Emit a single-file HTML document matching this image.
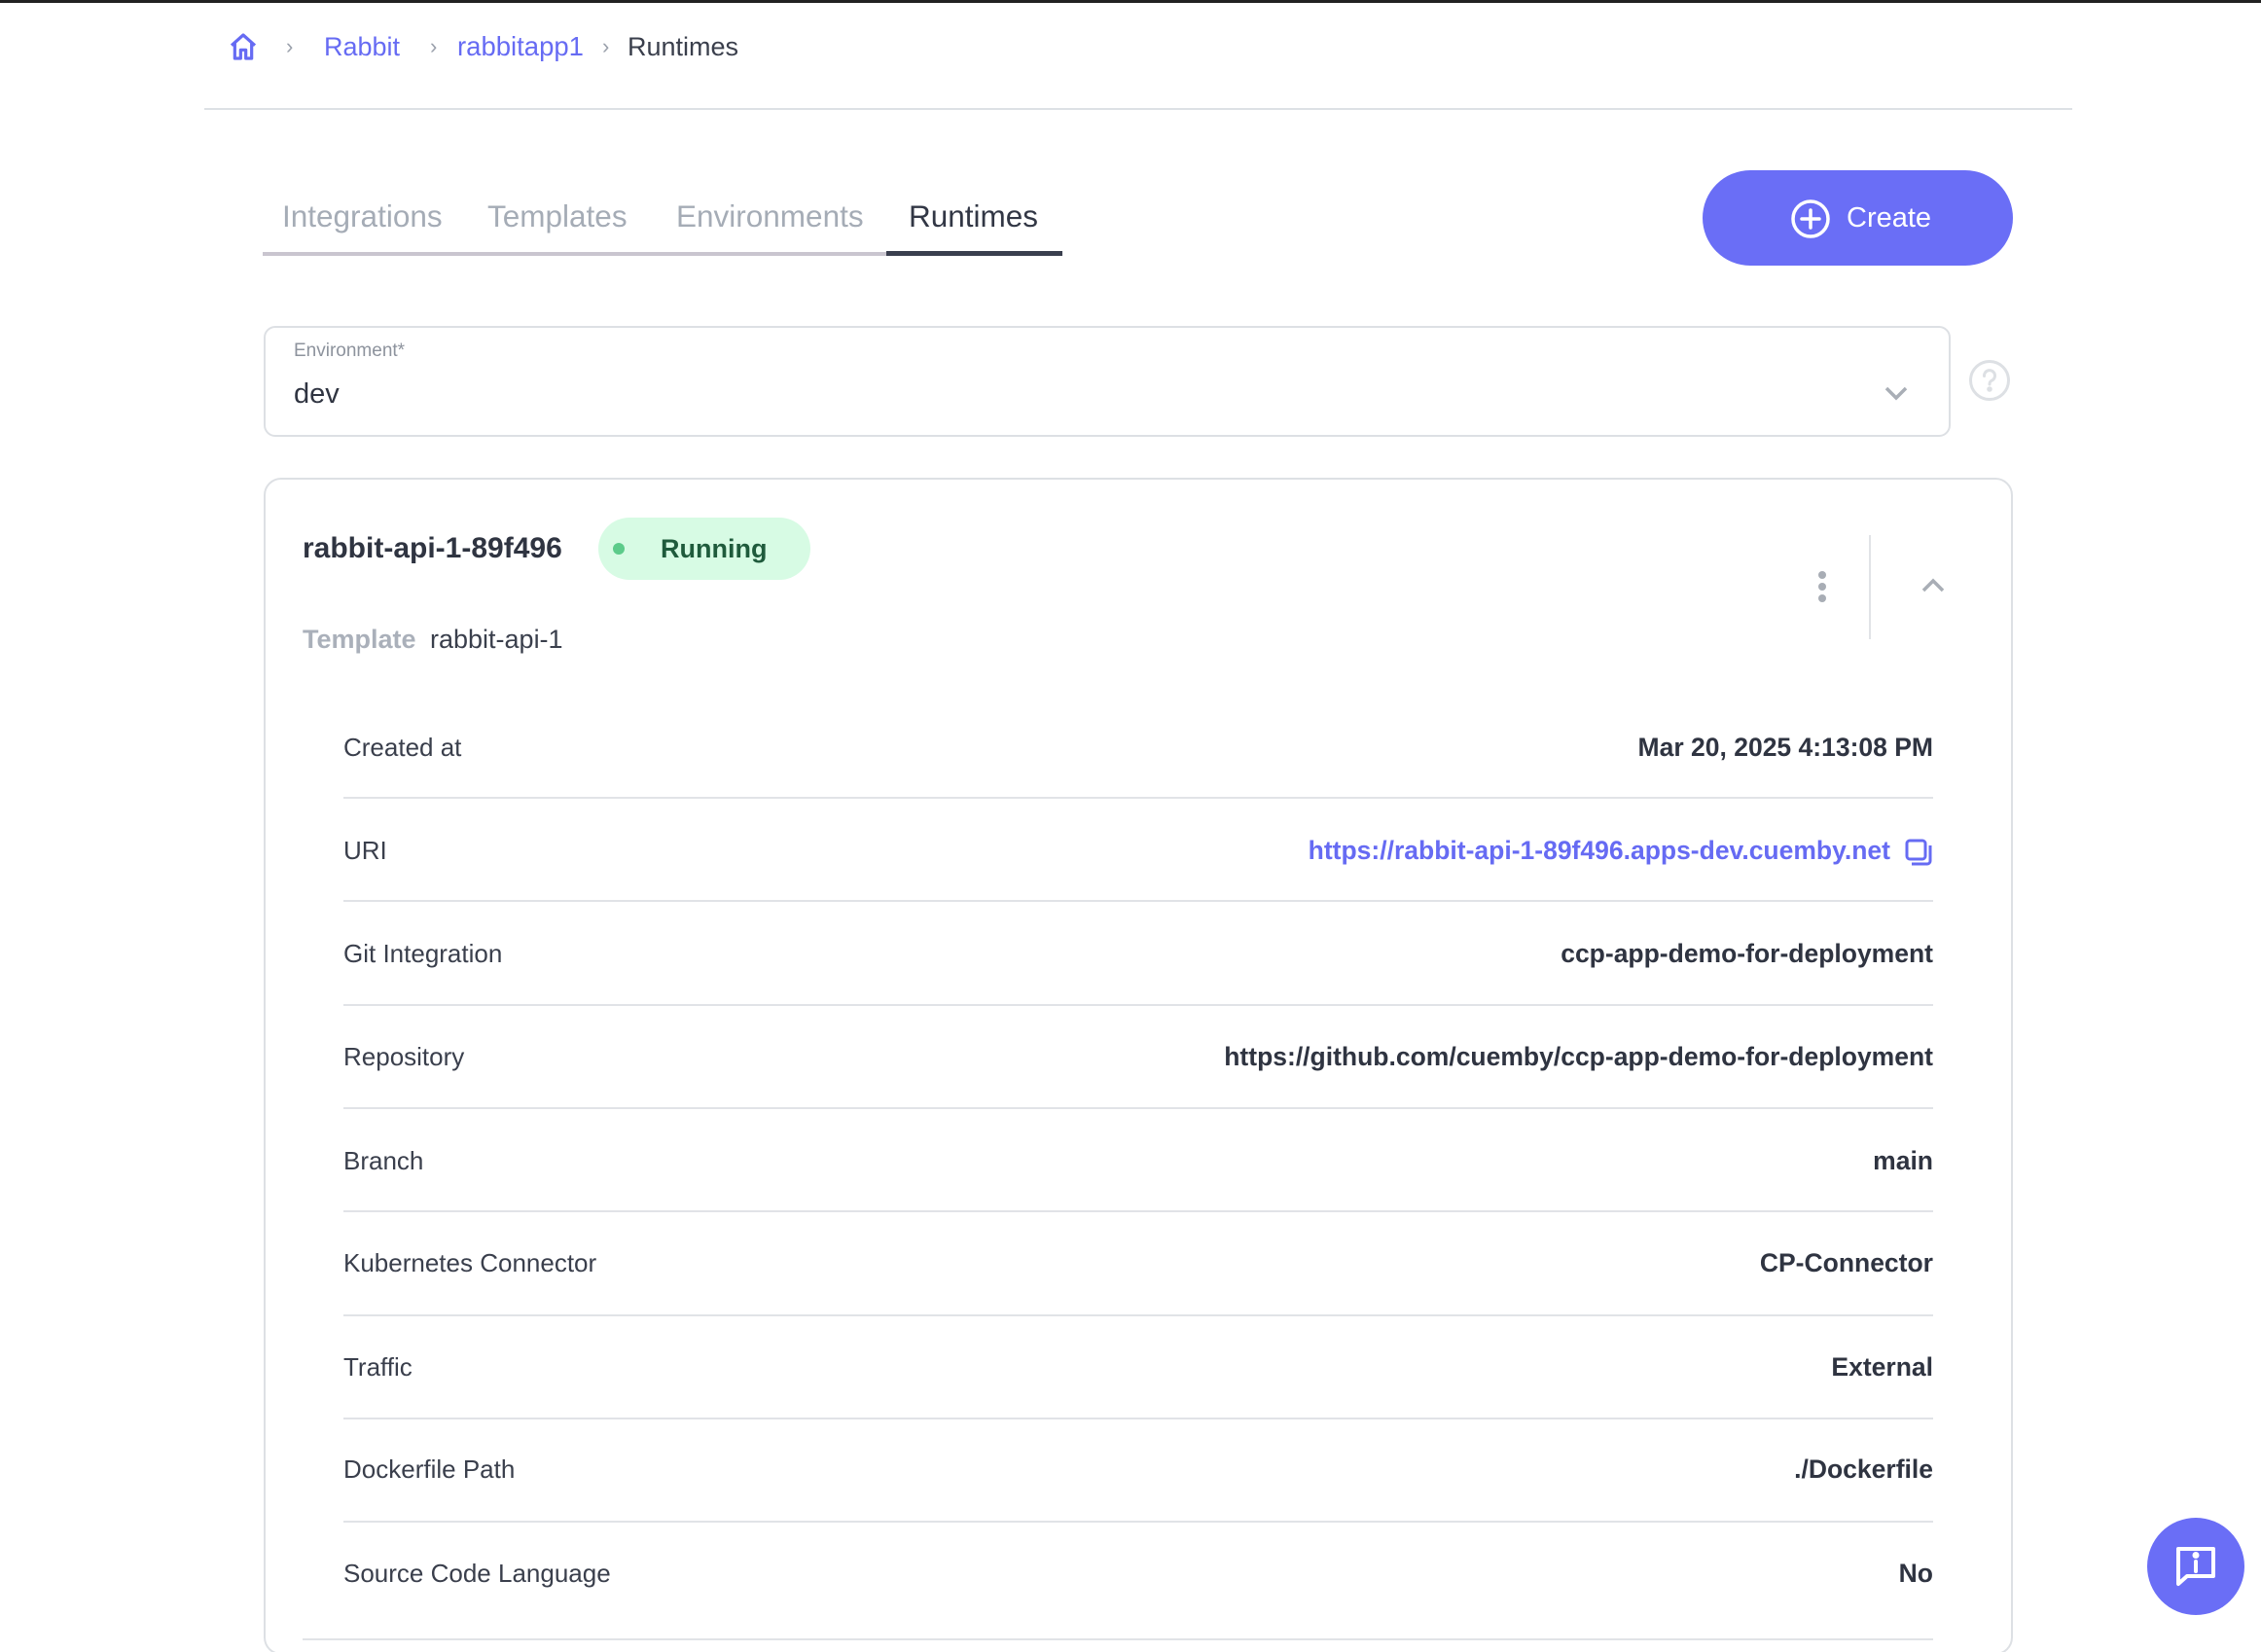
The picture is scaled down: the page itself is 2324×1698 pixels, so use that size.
<!DOCTYPE html>
<html><head><meta charset="utf-8">
<style>
*{margin:0;padding:0;box-sizing:border-box}
html,body{width:2324px;height:1698px;overflow:hidden;background:#fff;font-family:"Liberation Sans",sans-serif;color:#2f3441}
#wrap{position:relative;width:2324px;height:1698px;overflow:hidden}
.a{position:absolute;white-space:nowrap}
.t{line-height:40px;height:40px}
.row{position:absolute;left:353px;width:1634px;height:40px;line-height:40px;font-size:26px}
.row .l{position:absolute;left:0;color:#3a3f4c}
.row .r{position:absolute;right:0;color:#2f3441;font-weight:bold;font-size:26.5px}
.hr{position:absolute;left:353px;width:1634px;height:2px;background:#e1e3e7}
</style></head><body><div id="wrap">
<div class="a" style="left:0;top:0;width:2324px;height:3px;background:#222"></div>

<svg class="a" style="left:234px;top:32px" width="32" height="32" viewBox="0 0 24 24" fill="none" stroke="#666bf3" stroke-width="2.4" stroke-linejoin="round"><path d="M3 11 L12 3 L21 11 M5.5 9 V21 H10 V14.5 H14 V21 H18.5 V9"/></svg>
<div class="a t" style="left:294px;top:28px;font-size:22px;color:#9aa0ab">›</div>
<div class="a t" style="left:333px;top:28px;font-size:27px;color:#666bf3">Rabbit</div>
<div class="a t" style="left:442px;top:28px;font-size:22px;color:#9aa0ab">›</div>
<div class="a t" style="left:470px;top:28px;font-size:27.5px;color:#666bf3">rabbitapp1</div>
<div class="a t" style="left:619px;top:28px;font-size:22px;color:#9aa0ab">›</div>
<div class="a t" style="left:645px;top:28px;font-size:27px;color:#3a3f4c">Runtimes</div>
<div class="a" style="left:210px;top:111px;width:1920px;height:2px;background:#dde1e5"></div>

<div class="a t" style="left:290px;top:202px;font-size:31.5px;color:#a5acb6">Integrations</div>
<div class="a t" style="left:501px;top:202px;font-size:31.5px;color:#a5acb6">Templates</div>
<div class="a t" style="left:695px;top:202px;font-size:31.5px;color:#a5acb6">Environments</div>
<div class="a t" style="left:934px;top:202px;font-size:31.5px;color:#323745">Runtimes</div>
<div class="a" style="left:270px;top:259px;width:641px;height:4px;background:#c9c5cf"></div>
<div class="a" style="left:911px;top:258px;width:181px;height:5px;background:#3a3f4e"></div>

<div class="a" style="left:1750px;top:175px;width:319px;height:98px;border-radius:49px;background:#6a6ef6"></div>
<svg class="a" style="left:1840px;top:204px" width="42" height="42" viewBox="0 0 42 42" fill="none" stroke="#fff" stroke-width="3.5" stroke-linecap="round"><circle cx="21" cy="21" r="18"/><path d="M21 12V30M12 21H30"/></svg>
<div class="a t" style="left:1898px;top:204px;font-size:29px;color:#fff">Create</div>

<div class="a" style="left:271px;top:335px;width:1734px;height:114px;border:2px solid #dde0e4;border-radius:12px"></div>
<div class="a" style="left:302px;top:349px;font-size:19px;line-height:24px;color:#8d939d">Environment*</div>
<div class="a t" style="left:302px;top:385px;font-size:29px;color:#2f3441">dev</div>
<svg class="a" style="left:1936px;top:395px" width="26" height="18" viewBox="0 0 26 18" fill="none" stroke="#a9aeb6" stroke-width="3.5"><path d="M3 4L13 14L23 4"/></svg>
<svg class="a" style="left:2023px;top:369px" width="44" height="44" viewBox="0 0 44 44" fill="none" stroke="#dde0e4" stroke-width="3"><circle cx="22" cy="22" r="19.5"/><path d="M16.5 17.5a5.5 5.5 0 1 1 8 4.5c-2 1-2.5 2-2.5 4" stroke-linecap="round"/><circle cx="22" cy="31" r="1.3" fill="#dde0e4"/></svg>

<div class="a" style="left:271px;top:491px;width:1798px;height:1210px;border:2px solid #dde0e4;border-radius:18px"></div>
<div class="a t" style="left:311px;top:544px;font-size:30px;font-weight:bold;color:#2f3441">rabbit-api-1-89f496</div>
<div class="a" style="left:615px;top:532px;width:218px;height:64px;border-radius:32px;background:#d7fbe4"></div>
<div class="a" style="left:630px;top:558px;width:12px;height:12px;border-radius:6px;background:#5ccb8a"></div>
<div class="a t" style="left:679px;top:544px;font-size:27px;font-weight:bold;color:#1f5b3c">Running</div>
<div class="a t" style="left:311px;top:637px;font-size:27px;color:#aab0ba;font-weight:bold">Template</div>
<div class="a t" style="left:442px;top:637px;font-size:27px;color:#3a3f4c">rabbit-api-1</div>

<svg class="a" style="left:1864px;top:586px" width="18" height="36" viewBox="0 0 18 36" fill="#a8adb5"><circle cx="9" cy="5" r="4"/><circle cx="9" cy="17" r="4"/><circle cx="9" cy="29" r="4"/></svg>
<div class="a" style="left:1921px;top:550px;width:2px;height:107px;background:#e1e3e7"></div>
<svg class="a" style="left:1974px;top:593px" width="26" height="18" viewBox="0 0 26 18" fill="none" stroke="#a9aeb6" stroke-width="3.5"><path d="M3 14L13 4L23 14"/></svg>

<div class="row" style="top:748px"><span class="l">Created at</span><span class="r">Mar 20, 2025 4:13:08 PM</span></div>
<div class="hr" style="top:819px"></div>
<div class="row" style="top:854px"><span class="l">URI</span><span class="r" style="right:44px;color:#666bf3">https://rabbit-api-1-89f496.apps-dev.cuemby.net</span>
<svg style="position:absolute;right:0;top:7px" width="30" height="30" viewBox="0 0 30 30" fill="none" stroke="#666bf3" stroke-width="3" stroke-linejoin="round"><rect x="3" y="3" width="19" height="19" rx="3"/><path d="M27 8V24a3 3 0 0 1-3 3H8"/></svg></div>
<div class="hr" style="top:925px"></div>
<div class="row" style="top:960px"><span class="l">Git Integration</span><span class="r">ccp-app-demo-for-deployment</span></div>
<div class="hr" style="top:1032px"></div>
<div class="row" style="top:1066px"><span class="l">Repository</span><span class="r">https://github.com/cuemby/ccp-app-demo-for-deployment</span></div>
<div class="hr" style="top:1138px"></div>
<div class="row" style="top:1173px"><span class="l">Branch</span><span class="r">main</span></div>
<div class="hr" style="top:1244px"></div>
<div class="row" style="top:1278px"><span class="l">Kubernetes Connector</span><span class="r">CP-Connector</span></div>
<div class="hr" style="top:1351px"></div>
<div class="row" style="top:1385px"><span class="l">Traffic</span><span class="r">External</span></div>
<div class="hr" style="top:1457px"></div>
<div class="row" style="top:1490px"><span class="l">Dockerfile Path</span><span class="r">./Dockerfile</span></div>
<div class="hr" style="top:1563px"></div>
<div class="row" style="top:1597px"><span class="l">Source Code Language</span><span class="r">No</span></div>
<div class="a" style="left:311px;top:1684px;width:1676px;height:2px;background:#e1e3e7"></div>

<div class="a" style="left:2207px;top:1560px;width:100px;height:100px;border-radius:50px;background:#6a6ef6"></div>
<svg class="a" style="left:2232px;top:1585px" width="50" height="50" viewBox="0 0 50 50" fill="none" stroke="#fff" stroke-width="4" stroke-linejoin="round"><path d="M7 7H43V35H16L7 43Z"/><path d="M25 20V30" stroke-linecap="round"/><circle cx="25" cy="13.5" r="1.5" fill="#fff"/></svg>
</div></body></html>
